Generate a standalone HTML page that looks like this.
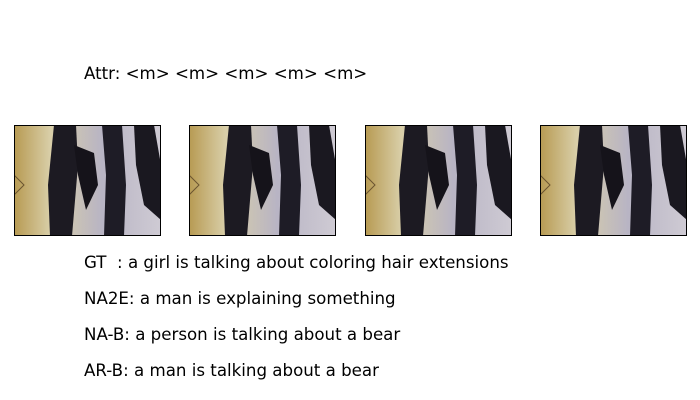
<html><head><style>
body{margin:0;width:700px;height:400px;background:#fff;position:relative;font-family:"DejaVu Sans",sans-serif;font-size:16.65px;color:#000;overflow:hidden}
.t{position:absolute;left:84px;white-space:pre;line-height:20px}
svg{position:absolute;top:125px}
</style></head><body>
<div class="t" style="top:64px">Attr: &lt;m&gt; &lt;m&gt; &lt;m&gt; &lt;m&gt; &lt;m&gt;</div>
<svg width="0" height="0" style="position:absolute"><defs>
<linearGradient id="g" x1="0" x2="1"><stop offset="0" stop-color="#b79a52"/><stop offset=".25" stop-color="#d9cfa9"/><stop offset=".6" stop-color="#b8b4c4"/><stop offset="1" stop-color="#cfcbd4"/></linearGradient>
<g id="f"><rect width="147" height="111" fill="url(#g)"/>
<path d="M40 0 L62 0 L64 40 L58 111 L36 111 L34 60Z" fill="#1c1a22"/>
<path d="M60 20 L80 28 L84 60 L72 85 L64 50Z" fill="#15131a"/>
<path d="M88 0 L108 0 L112 60 L110 111 L90 111 L92 50Z" fill="#1e1c26"/>
<path d="M120 0 L140 0 L147 40 L147 95 L130 80 L122 40Z" fill="#1a1820"/>
<path d="M0 50 L10 60 L0 70" stroke="#6b5530" fill="none"/>
<rect x=".5" y=".5" width="146" height="110" fill="none" stroke="#000"/></g></defs></svg>
<svg style="left:14px" width="147" height="111"><use href="#f"/></svg>
<svg style="left:189px" width="147" height="111"><use href="#f"/></svg>
<svg style="left:365px" width="147" height="111"><use href="#f"/></svg>
<svg style="left:540px" width="147" height="111"><use href="#f"/></svg>
<div class="t" style="top:253px">GT  : a girl is talking about coloring hair extensions</div>
<div class="t" style="top:289px">NA2E: a man is explaining something</div>
<div class="t" style="top:325px">NA-B: a person is talking about a bear</div>
<div class="t" style="top:361px">AR-B: a man is talking about a bear</div>
</body></html>
